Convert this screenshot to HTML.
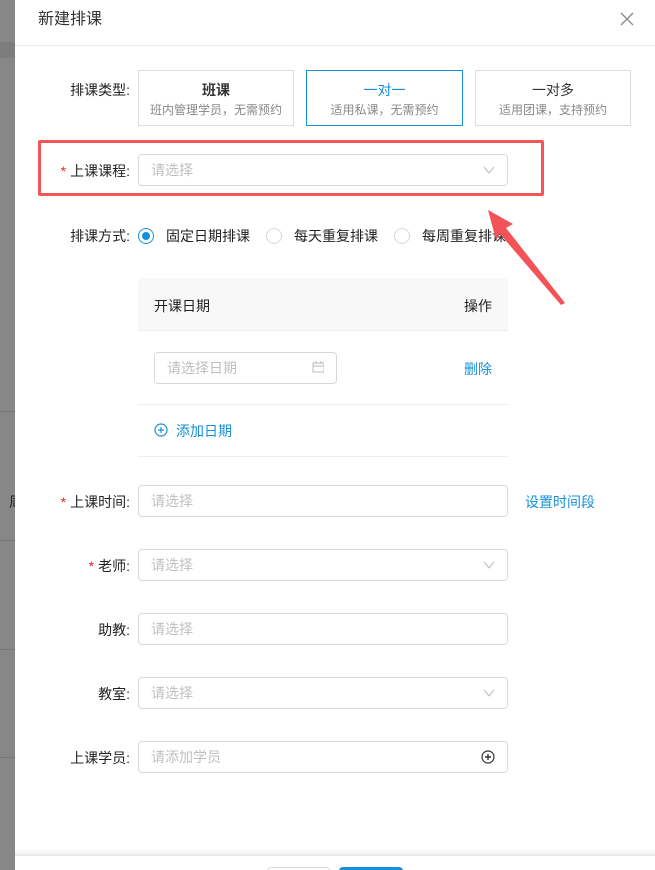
<!DOCTYPE html>
<html style="width:655px;height:870px;overflow:hidden"><head><meta charset="utf-8"><style>
*{box-sizing:border-box;margin:0;padding:0}
body{width:655px;height:870px;overflow:hidden;position:relative;background:#878787;font-family:"Liberation Sans","Noto Sans CJK SC",sans-serif;color:#333}
.a{position:absolute}
.modal{left:15px;top:0;width:640px;height:870px;background:#fff}
.hl{left:0;width:15px;height:1px;background:#777}
.lbl{font-size:14px;color:#222;text-align:right;width:120px;left:10px}
.req{color:#f5222d;margin-right:4px}
.inp{left:138px;width:370px;height:32px;border:1px solid #d9d9d9;border-radius:4px;font-size:14px;color:#bfbfbf;padding:6px 12px;line-height:18px}
.chev{position:absolute;right:12px;top:9px;width:12px;height:12px}
.card{top:70px;height:56px;border:1px solid #ddd;text-align:center}
.card b{display:block;font-size:14px;color:#333;margin-top:10px;line-height:18px}
.card span{display:block;font-size:12px;color:#888;margin-top:3px;line-height:16px}
.radio{width:16px;height:16px;border:1px solid #d9d9d9;border-radius:50%;top:228px}
.rt{font-size:14px;top:226px;color:#222}
</style></head><body>
<div class="a" style="left:0;top:42px;width:15px;height:16px;background:#7d7d7d"></div>
<div class="a hl" style="top:411px"></div>
<div class="a hl" style="top:540px"></div>
<div class="a hl" style="top:649px"></div>
<div class="a hl" style="top:757px"></div>
<div class="a" style="left:9px;top:492px;font-size:14px;color:#222">周</div>
<div class="a modal"></div>
<div class="a" style="left:38px;top:9px;font-size:16px;color:#333;line-height:22px">新建排课</div>
<svg class="a" style="left:620px;top:12px" width="14" height="14"><path d="M1 1L13 13M13 1L1 13" stroke="#888" stroke-width="1.3"/></svg>
<div class="a" style="left:15px;top:45px;width:640px;height:1px;background:#e8e8e8"></div>

<div class="a lbl" style="top:80px">排课类型:</div>
<div class="a card" style="left:138px;width:156px"><b>班课</b><span>班内管理学员，无需预约</span></div>
<div class="a card" style="left:306px;width:157px;border-color:#1890d8"><b style="color:#1890d8;font-weight:normal">一对一</b><span>适用私课，无需预约</span></div>
<div class="a card" style="left:475px;width:156px"><b style="font-weight:normal">一对多</b><span>适用团课，支持预约</span></div>

<div class="a lbl" style="top:161px"><span class="req">*</span>上课课程:</div>
<div class="a inp" style="top:154px">请选择<svg class="chev"><path d="M1 3L6 9L11 3" fill="none" stroke="#bbb"/></svg></div>
<div class="a" style="left:38px;top:140px;width:506px;height:56px;border:3px solid #f2555a;border-radius:2px"></div>

<div class="a lbl" style="top:226px">排课方式:</div>
<div class="a radio" style="left:138px;border-color:#1890d8"><div class="a" style="left:3px;top:3px;width:8px;height:8px;border-radius:50%;background:#1890d8"></div></div>
<div class="a rt" style="left:166px">固定日期排课</div>
<div class="a radio" style="left:266px"></div>
<div class="a rt" style="left:294px">每天重复排课</div>
<div class="a radio" style="left:394px"></div>
<div class="a rt" style="left:422px">每周重复排课</div>

<div class="a" style="left:138px;top:278px;width:370px;height:53px;background:#f8f8f8;border-bottom:1px solid #eee;border-radius:4px 4px 0 0"></div>
<div class="a" style="left:154px;top:296px;font-size:14px;color:#222">开课日期</div>
<div class="a" style="left:464px;top:296px;font-size:14px;color:#222">操作</div>
<div class="a inp" style="left:154px;top:352px;width:183px">请选择日期<svg class="chev" style="top:8px"><rect x="1" y="2" width="11" height="9" fill="none" stroke="#bbb"/><path d="M1 5H12M4 0V3M9 0V3" stroke="#bbb"/></svg></div>
<div class="a" style="left:464px;top:359px;font-size:14px;color:#1890d8">删除</div>
<div class="a" style="left:138px;top:404px;width:370px;height:1px;background:#eee"></div>
<svg class="a" style="left:154px;top:423px" width="14" height="14"><circle cx="7" cy="7" r="6" fill="none" stroke="#1890d8" stroke-width="1.2"/><path d="M4 7H10M7 4V10" stroke="#1890d8" stroke-width="1.2"/></svg>
<div class="a" style="left:176px;top:421px;font-size:14px;color:#1890d8">添加日期</div>
<div class="a" style="left:138px;top:456px;width:370px;height:1px;background:#eee"></div>

<div class="a lbl" style="top:492px"><span class="req">*</span>上课时间:</div>
<div class="a inp" style="top:485px">请选择</div>
<div class="a" style="left:525px;top:492px;font-size:14px;color:#1890d8">设置时间段</div>

<div class="a lbl" style="top:556px"><span class="req">*</span>老师:</div>
<div class="a inp" style="top:549px">请选择<svg class="chev"><path d="M1 3L6 9L11 3" fill="none" stroke="#bbb"/></svg></div>
<div class="a lbl" style="top:620px">助教:</div>
<div class="a inp" style="top:613px">请选择</div>
<div class="a lbl" style="top:684px">教室:</div>
<div class="a inp" style="top:677px">请选择<svg class="chev"><path d="M1 3L6 9L11 3" fill="none" stroke="#bbb"/></svg></div>
<div class="a lbl" style="top:748px">上课学员:</div>
<div class="a inp" style="top:741px">请添加学员<svg class="chev" style="top:8px;width:14px;height:14px"><circle cx="7" cy="7" r="6" fill="none" stroke="#333" stroke-width="1.2"/><path d="M4 7H10M7 4V10" stroke="#333" stroke-width="1.4"/></svg></div>

<div class="a" style="left:15px;top:848px;width:640px;height:7px;background:linear-gradient(#fff,#f0f0f0)"></div>
<div class="a" style="left:15px;top:855px;width:640px;height:15px;background:#fff;border-top:1px solid #e8e8e8;overflow:hidden">
<div class="a" style="left:252px;top:11px;width:63px;height:20px;border:1px solid #d9d9d9;border-radius:4px"></div>
<div class="a" style="left:324px;top:11px;width:64px;height:20px;background:#1890d8;border-radius:4px"></div>
</div>

<svg class="a" style="left:0;top:0" width="655" height="870"><path d="M488 210L513 224L506 228L565 303L561 305L500 234L496 240Z" fill="#f25358"/></svg>
</body></html>
